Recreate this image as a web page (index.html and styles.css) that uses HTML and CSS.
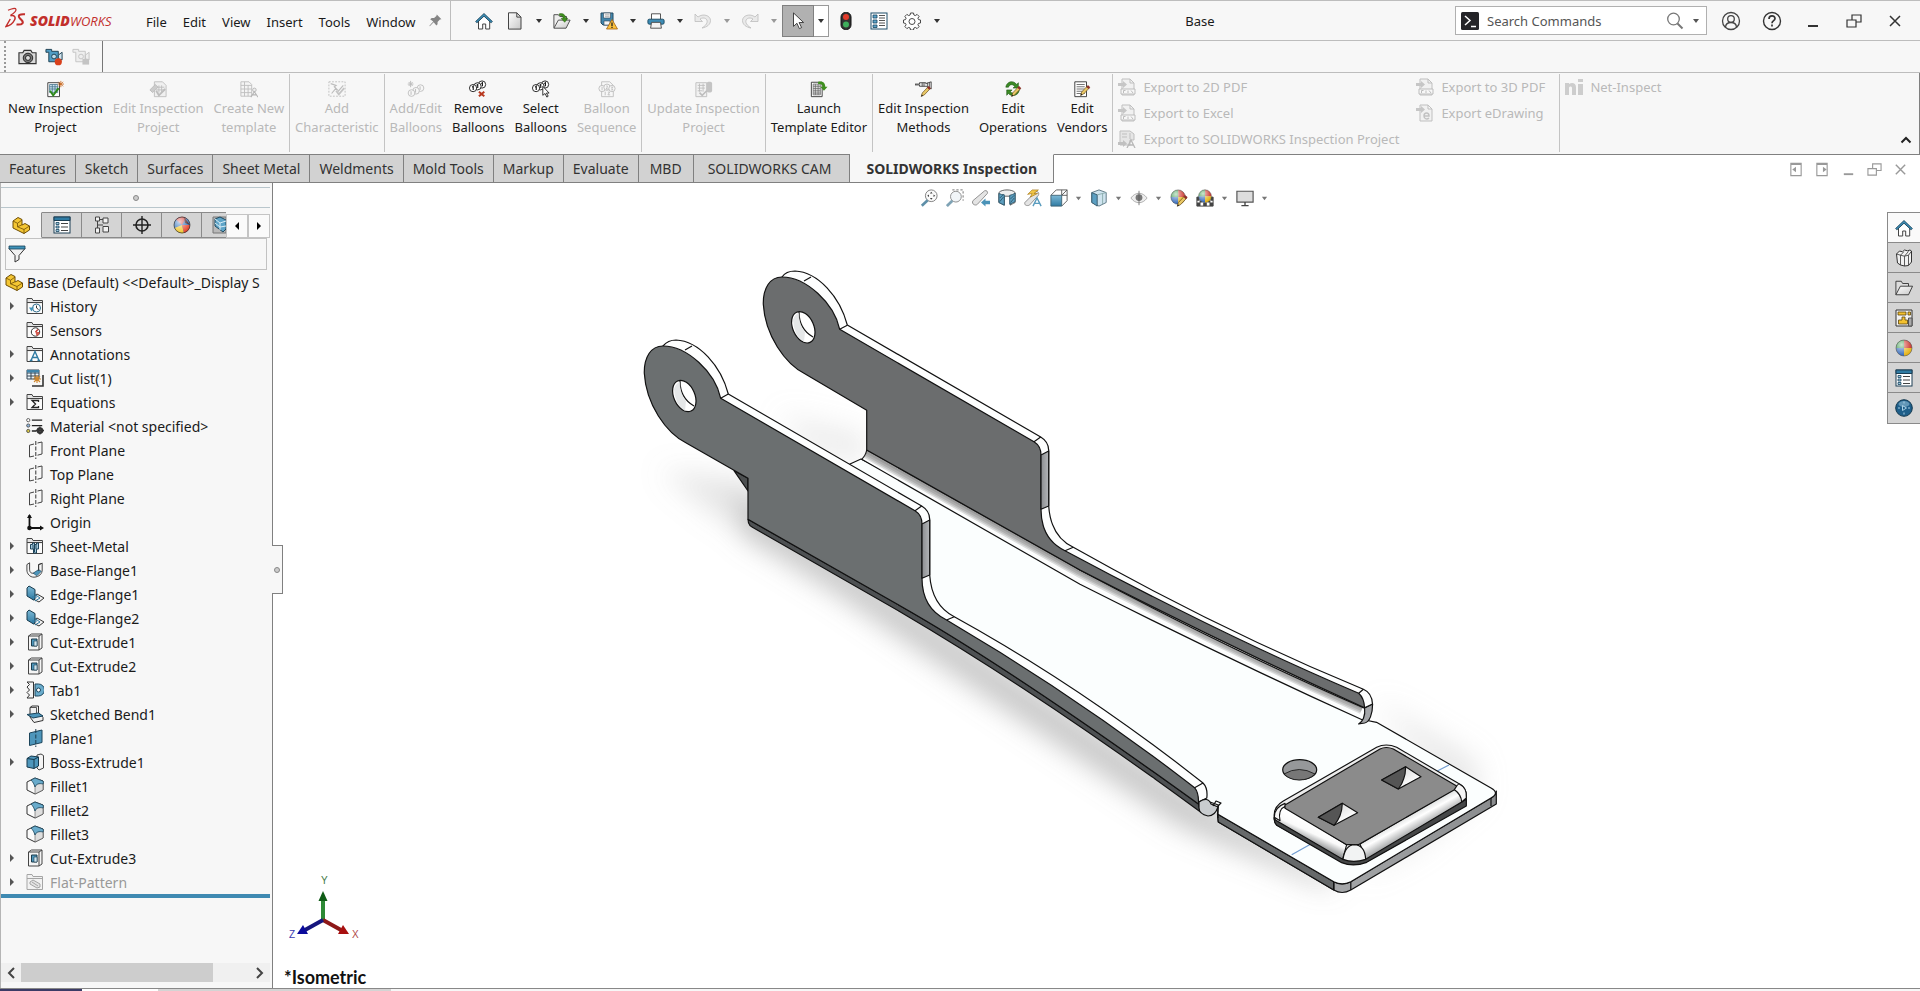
FILE: index.html
```html
<!DOCTYPE html>
<html lang="en">
<head>
<meta charset="UTF-8">
<meta name="viewport" content="width=device-width, initial-scale=1.0">
<title>SOLIDWORKS - Base</title>
<link rel="stylesheet" href="styles.css">
</head>
<body>

<!-- icon sprite -->
<svg class="sprite" xmlns="http://www.w3.org/2000/svg">
  <defs>
    <linearGradient id="gBlue" x1="0" y1="0" x2="0" y2="1"><stop offset="0" stop-color="#7db9d6"/><stop offset="1" stop-color="#2f7ba3"/></linearGradient>
    <linearGradient id="gGrey" x1="0" y1="0" x2="1" y2="1"><stop offset="0" stop-color="#fff"/><stop offset="1" stop-color="#c8c8c8"/></linearGradient>
    <radialGradient id="gShine" cx=".35" cy=".3" r=".7"><stop offset="0" stop-color="#fff" stop-opacity=".75"/><stop offset="1" stop-color="#fff" stop-opacity="0"/></radialGradient>
  </defs>

  <symbol id="i-caret" viewBox="0 0 8 8"><path d="M1 2h6L4 6z" fill="currentColor"/></symbol>
  <symbol id="i-pin" viewBox="0 0 18 18"><path d="M10 2l6 6-2 .5-3 3v3L9.500 16 6 12l-5 5-.5-.5 5-5.500L1.500 8 3.500 6.500h3l3-2.500z" fill="#858585"/></symbol>
  <symbol id="i-home" viewBox="0 0 18 18"><path d="M3.500 9v8h4.200v-5h3v5h4V9L9 3.500z" fill="#fff" stroke="#444"/><path d="M.6 9.500L9 1.500l8.400 8-1.300 1.300L9 4.200 1.900 10.800z" fill="#3b8cb4" stroke="#173f55" stroke-width=".8"/></symbol>
  <symbol id="i-new" viewBox="0 0 18 18"><path d="M2.500.8h8.300l4.200 4.300v12H2.500z" fill="url(#gGrey)" stroke="#444"/><path d="M10.800.8v4.300H15" fill="none" stroke="#444"/></symbol>
  <symbol id="i-open" viewBox="0 0 20 18"><path d="M1 16.500V2h5l1.500 2H15v4" fill="#eee" stroke="#444"/><path d="M1 17L6 8h13l-4.500 9z" fill="url(#gGrey)" stroke="#444"/><path d="M7 1c4-1 7 1 7 5h2.500L13 10.500 9 6h2.200c0-2-1.500-3.500-4.200-3.200z" fill="#3f8f1e" stroke="#215a0a" stroke-width=".5"/></symbol>
  <symbol id="i-save" viewBox="0 0 18 18"><path d="M1 1h12v12H3l-2-2z" fill="#4387ad" stroke="#234a62"/><path d="M3.500 1h7v5h-7zM4 9h6v4H4z" fill="#f5f5f5" stroke="#345" stroke-width=".6"/><path d="M5 2.800h4.500M5 4.300h4.500" stroke="#888" stroke-width=".6"/><path d="M12 7.500l5.500 9.500h-11z" fill="#fbc13c" stroke="#a45f0c" stroke-width=".8"/><path d="M12 10.500v3.400M12 14.700v1.300" stroke="#222" stroke-width="1.300"/></symbol>
  <symbol id="i-print" viewBox="0 0 20 18"><path d="M5 7V1h10l0 6" fill="#fff" stroke="#444"/><rect x="1" y="7" width="18" height="5.500" rx="1.500" fill="#3d8cb5" stroke="#19465f"/><path d="M5 10.500h10l1 6.500H4z" fill="#f3f3f3" stroke="#444"/></symbol>
  <symbol id="i-undo" viewBox="0 0 18 18"><path d="M1 2v7.500h7.500L6 7c4-2.500 8 0 7 3.500-.5 2-2 3.500-5 5.500 5-.8 8.500-3.500 8.500-7.500C16.500 3.500 9 1 4 5z" fill="#e9e9e9" stroke="#bcbcbc" stroke-width=".8"/></symbol>
  <symbol id="i-cursor" viewBox="0 0 18 20"><path d="M4 1v15l3.800-3.500 2.700 6 2.500-1.200-2.800-5.600h5z" fill="#fff" stroke="#333"/></symbol>
  <symbol id="i-light" viewBox="0 0 12 18"><rect x="1" y=".5" width="10" height="17" rx="4.500" fill="#333" stroke="#111"/><circle cx="6" cy="5" r="3" fill="#e23b2a"/><circle cx="6" cy="12.500" r="3" fill="#3fae5c"/></symbol>
  <symbol id="i-list" viewBox="0 0 18 18"><rect x="1" y="1" width="16" height="16" fill="#fff" stroke="#1f4f6b"/><path d="M3 3h4v3H3zM3 8h4v3H3zM3 13h4v2.500H3z" fill="#5da4c8" stroke="#17455f" stroke-width=".8"/><path d="M9 3.500h6M9 6h6M9 8.500h6M9 11h6M9 13.500h6" stroke="#555"/></symbol>
  <symbol id="i-proplist" viewBox="0 0 18 18"><rect x="1" y="1" width="16" height="16" fill="#fff" stroke="#1c3f54"/><path d="M1 1h16v3.500H1z" fill="#2f7ba3" stroke="#1c3f54"/><path d="M3 6.500h3v2H3zM3 10h3v2H3zM3 13.500h3v2H3z" fill="#9fc9de" stroke="#17455f" stroke-width=".8"/><path d="M8 7.500h7M8 11h7M8 14.500h7" stroke="#444"/></symbol>
  <symbol id="i-gear" viewBox="0 0 18 18"><path d="M7.500 1h3l.4 2 1.400.6 1.800-1.200 2 2-1.200 1.800.6 1.400 2 .4v3l-2 .4-.6 1.400 1.200 1.800-2 2-1.800-1.200-1.400.6-.4 2h-3l-.4-2-1.400-.6-1.800 1.200-2-2 1.200-1.800-.6-1.400-2-.4V8l2-.4.6-1.400-1.200-1.800 2-2 1.800 1.200L7.100 3z" fill="#fff" stroke="#4a4a4a"/><circle cx="9" cy="9.500" r="3" fill="none" stroke="#4a4a4a"/></symbol>
  <symbol id="i-cmd" viewBox="0 0 18 18"><rect width="18" height="18" rx="1.500" fill="#242428"/><path d="M4 4l5 4.500L4 13M10 14.500h5" fill="none" stroke="#fff" stroke-width="1.500"/></symbol>
  <symbol id="i-search" viewBox="0 0 18 18"><circle cx="7.500" cy="7" r="5.800" fill="none" stroke="#777" stroke-width="1.300"/><path d="M11.500 11.500l5 5" stroke="#777" stroke-width="2"/></symbol>
  <symbol id="i-user" viewBox="0 0 20 20"><g fill="none" stroke="#444" stroke-width="1.300"><circle cx="10" cy="10" r="8.500"/><circle cx="10" cy="8" r="3.300"/><path d="M4.500 16c.3-3 2.200-4.500 5.500-4.500s5.200 1.500 5.500 4.500"/></g></symbol>
  <symbol id="i-help" viewBox="0 0 20 20"><circle cx="10" cy="10" r="8.500" fill="none" stroke="#333" stroke-width="1.400"/><path d="M7 8c0-4 6-4 6-.5 0 2.200-3 2-3 4.700M10 13.500v2" fill="none" stroke="#333" stroke-width="1.700"/></symbol>
  <symbol id="i-min" viewBox="0 0 16 16"><path d="M3 13h10" stroke="currentColor" stroke-width="2"/></symbol>
  <symbol id="i-restore" viewBox="0 0 16 16"><path d="M1 7h9v7H1zM6 7V2h9v7h-5" fill="none" stroke="currentColor" stroke-width="1.200"/></symbol>
  <symbol id="i-close" viewBox="0 0 16 16"><path d="M3 3l10 10M13 3L3 13" stroke="currentColor" stroke-width="1.500"/></symbol>
  <symbol id="i-paneL" viewBox="0 0 14 16"><path d="M1.500 1.500h11v13h-11zM1.500 2.500h11" fill="none" stroke="currentColor" stroke-width="1.200"/><path d="M7 5v6L3 8z" fill="currentColor"/></symbol>
  <symbol id="i-paneR" viewBox="0 0 14 16"><path d="M1.500 1.500h11v13h-11zM1.500 2.500h11" fill="none" stroke="currentColor" stroke-width="1.200"/><path d="M8 5v6l4-3z" fill="currentColor"/></symbol>
  <symbol id="i-up" viewBox="0 0 12 8"><path d="M1.500 6.500L6 2l4.500 4.500" fill="none" stroke="#222" stroke-width="2"/></symbol>

  <symbol id="i-camera" viewBox="0 0 20 18"><path d="M1 4.500h4l1.500-2.500h7L15 4.500h4V16H1z" fill="#d9d9d9" stroke="#333" stroke-width="1.200"/><circle cx="10.500" cy="10" r="5" fill="#777" stroke="#222"/><circle cx="10.500" cy="10" r="2.600" fill="#ddd" stroke="#222"/></symbol>
  <symbol id="i-video" viewBox="0 0 20 18"><path d="M1 1h6v2h7v11H4V4H1z" fill="#4f9cc4" stroke="#1d3f52"/><path d="M14 7l4-3v8l-4-1z" fill="#cfe3ee" stroke="#1d3f52"/><circle cx="9.500" cy="8.500" r="2.500" fill="#bfdcea" stroke="#1d3f52"/><circle cx="14" cy="14" r="3.800" fill="#d8401c"/></symbol>
  <symbol id="i-videooff" viewBox="0 0 20 18"><path d="M1 1h6v2h7v11H4V4H1zM14 7l4-3v8l-4-1z" fill="#eee" stroke="#c4c4c4"/><circle cx="9.500" cy="8.500" r="2.500" fill="none" stroke="#c4c4c4"/><path d="M11 11h7v6h-7z" fill="#c4c4c4"/></symbol>

  <symbol id="i-newproj" viewBox="0 0 20 18"><path d="M2 2h13v15.500H2z" fill="#fff" stroke="#333"/><path d="M4 4h9v9H4zM4 6.500h9M4 9h9M7 4v9M10 4v9" fill="#cfe4ef" stroke="#3b6c86" stroke-width=".8"/><path d="M4.500 11l3.500 5 6-8" fill="none" stroke="#2f8a1d" stroke-width="2.200"/><path d="M16.500 0v7M13 3.500h7M14 1l5 5M19 1l-5 5" stroke="#c9671c" stroke-width=".9"/></symbol>
  <symbol id="i-editproj" viewBox="0 0 20 18"><path d="M6 1h9l4 4v12.500H6zM8 7h9M8 10h9M11 5v8M14 5v8" fill="#f0f0f0" stroke="#bdbdbd"/><path d="M8 11l3 5 7-7" fill="none" stroke="#bdbdbd" stroke-width="2"/><path d="M1 10l6-6 3 3-6 6z" fill="#ccc" stroke="#bbb"/></symbol>
  <symbol id="i-template" viewBox="0 0 20 18"><path d="M1 1h9l3 3v13H1zM1 5h12M1 9h12M1 13h12M5 1v16M9 5v12" fill="#f4f4f4" stroke="#bdbdbd"/><circle cx="16" cy="10" r="2" fill="#eee" stroke="#b5b5b5"/><path d="M12 18l4-6 4 6M13.500 15.500h5" fill="none" stroke="#b5b5b5" stroke-width="1.200"/></symbol>
  <symbol id="i-addchar" viewBox="0 0 20 18"><path d="M1 1h18v16H1z" fill="none" stroke="#bdbdbd" stroke-dasharray="2 1.500"/><path d="M3 3l6 2-2 1.500 4 4M4 14l5-6M17 5l-6 7" stroke="#bdbdbd" stroke-width="1.300" fill="none"/><path d="M9 11l3 4 6-7" stroke="#c4c4c4" stroke-width="2" fill="none"/></symbol>
  <symbol id="i-chain" viewBox="0 0 20 18"><g fill="#fff" stroke="currentColor"><circle cx="14.500" cy="5" r="4"/><circle cx="9.500" cy="7" r="4"/><circle cx="4.500" cy="9" r="4"/></g><path d="M3.500 8l1.200-1v4M8.500 6l1.200-1v4M13.700 4l1.200-1v4" fill="none" stroke="currentColor" stroke-width="1.300"/></symbol>
  <symbol id="i-addballoon" viewBox="0 0 20 18"><g fill="#f7f7f7" stroke="#bdbdbd"><circle cx="15" cy="8" r="3.700"/><circle cx="10" cy="11" r="3.700"/><circle cx="5" cy="13.500" r="3.700"/><path d="M14.500 6v4M9.500 9v4M4.500 11.500v4M4 0v7M.8 3.500h6.400M1.800 1.200l4.500 4.500M6.300 1.200L1.800 5.700" stroke-width="1.100"/></g></symbol>
  <symbol id="i-seq" viewBox="0 0 20 18"><g fill="#f7f7f7" stroke="#bdbdbd"><path d="M4 1h9l4 4v12.500H4z"/><circle cx="4.500" cy="8.500" r="3.500"/><circle cx="10" cy="7" r="3.500"/><circle cx="15.500" cy="8.500" r="3.500"/><path d="M4.500 6.500v4M9 6c2-1.500 2 .5 0 3h2.500M14.500 7h2l-1 1.500 1 1.500h-2M8 12v4M11 12.500h2l-2 3h2.500" fill="none"/></g></symbol>
  <symbol id="i-update" viewBox="0 0 20 18"><g fill="#f2f2f2" stroke="#bdbdbd"><path d="M1 2h12v15.500H1zM3 5h8M3 8h8M3 11h5M5 3v9M9 3v9"/><path d="M5 13l3 3 5-5" fill="none" stroke-width="1.800"/></g><rect x="13" y="1" width="6" height="12" rx="2" fill="#c4c4c4"/></symbol>
  <symbol id="i-launch" viewBox="0 0 20 18"><path d="M1.500 1.500h12v16h-12z" fill="#fff" stroke="#333"/><path d="M3.500 3.500h8v12h-8zM3.500 6h8M3.500 8.500h8M3.500 11h8M3.500 13.500h8M6 3.500v12M9 3.500v12" fill="#ddd" stroke="#666" stroke-width=".8"/><path d="M9 1c5-1.500 8 1 8 5.500h2.500l-4 4.500-4-4.500H14C14 4 12 3 9 3.500z" fill="#3f8f1e"/></symbol>
  <symbol id="i-pencil" viewBox="4 1 16 17"><path d="M6 17l1.500-5L16 3l3 2.800-8.500 9z" fill="#e9c765" stroke="#5d4213" stroke-width=".9"/><path d="M14.500 4.500L17 2l3 3-2.500 2.500z" fill="#8d2f2a"/><path d="M6 17l.8-2.800 2 1.800z" fill="#222"/></symbol>
  <symbol id="i-methods" viewBox="0 0 20 18"><path d="M0 3.500h5V2h7v1l6-2v8l-5-2.500V6H5V4.500H0z" fill="#e6e6e6" stroke="#333" stroke-width=".9"/><path d="M8 2v4M10 2v4M14 2v5M16 1.500v6" stroke="#333" stroke-width=".8"/><use href="#i-pencil" x="4" y="5" width="15" height="13"/></symbol>
  <symbol id="i-ops" viewBox="0 0 20 18"><path d="M2 7c1-7 9-8 12-3l2-2v6h-6l2-2C9 3 6 4 5 7zM17 10c-1 7-9 8-12 4l-2 2v-6h6l-2 2c3 3 6 1 7-2z" fill="#3b8a25" stroke="#1c5210" stroke-width=".6"/><use href="#i-pencil" x="6" y="5" width="14" height="13"/></symbol>
  <symbol id="i-vendors" viewBox="0 0 20 18"><path d="M2 1h13v16.500H2z" fill="#fff" stroke="#333"/><path d="M4 4h9M4 6.500h9M4 9h9M4 11.500h9M4 14h9" stroke="#666"/><use href="#i-pencil" x="6" y="4" width="14" height="13"/></symbol>
  <symbol id="i-exp" viewBox="0 0 18 18"><path d="M4 1h8l4 4v12H4z" fill="#f1f1f1" stroke="#bfbfbf"/><path d="M12 1v4h4" fill="none" stroke="#bfbfbf"/><path d="M0 5h5V3l4 3.500L5 10V8H0z" fill="#c6c6c6"/><path d="M3 11h14v5H3z" fill="#f7f7f7" stroke="#bdbdbd"/><path d="M5.500 15v-2.500h2M10 12.500v2.500M13 12.500l2 2.500" stroke="#bdbdbd" fill="none"/></symbol>
  <symbol id="i-expe" viewBox="0 0 18 18"><path d="M4 1h8l4 4v12H4zM12 1v4h4" fill="#f1f1f1" stroke="#bfbfbf"/><path d="M0 4h5V2l4 3.500L5 9V7H0z" fill="#c6c6c6"/><path d="M8 12h5c0-4-5-4-5 0 0 3.500 3.500 3.500 5 2" fill="none" stroke="#c2c2c2" stroke-width="1.500"/></symbol>
  <symbol id="i-expsw" viewBox="0 0 18 18"><path d="M2 1h10l4 3v6h-4v5H2z" fill="#e6e6e6" stroke="#bfbfbf"/><path d="M4 4h5M4 7h5M12 3v6" stroke="#bfbfbf" fill="none"/><path d="M0 12h5v-2l4 3.500L5 17v-2H0z" fill="#c0c0c0"/><path d="M9 18l4-8 4 8M10.500 15h5" fill="none" stroke="#b8b8b8" stroke-width="1.300"/></symbol>
  <symbol id="i-ni" viewBox="0 0 18 18"><path d="M0 5h4v1c3-2 7-1 7 3v8H7v-7c0-2-3-2-3 0v7H0zM13 6h5v11h-5zM13 1h5v3h-5z" fill="#cdcdcd"/></symbol>

  <symbol id="i-part" viewBox="0 0 18 18"><path d="M1 5l5-3.500 4 2V9l3-1.500L17.500 10v4L12 17.500 1 12z" fill="#f4c633" stroke="#6e4e06"/><path d="M1 5l4.500 2.300L10 4M5.500 7.300v3.500L12 13.500l5.500-3.500M12 13.500v4M5.500 10.800L10 8.800" fill="none" stroke="#6e4e06" stroke-width=".8"/></symbol>
  <symbol id="i-config" viewBox="0 0 18 18"><g fill="#f2f2f2" stroke="#444"><path d="M2.500 1h4v4h-4zM2.500 12h4v5h-4z"/><path d="M4.500 5v7M6.500 3.500H10M4.500 9H10M10 2h5v5h-5zM10 10.500h5.500v5.500H10z"/></g></symbol>
  <symbol id="i-target" viewBox="0 0 18 18"><circle cx="9" cy="9" r="6" fill="none" stroke="#222" stroke-width="1.600"/><path d="M9 0v18M0 9h18" stroke="#222" stroke-width="1.400"/></symbol>
  <symbol id="i-ball" viewBox="0 0 18 18"><path d="M9 9V1a8 8 0 0 1 8 8z" fill="#c8281f"/><path d="M9 9h8a8 8 0 0 1-8 8z" fill="#e5b212"/><path d="M9 9v8a8 8 0 0 1-8-8z" fill="#2f66b8"/><path d="M9 9H1a8 8 0 0 1 8-8z" fill="#2f9440"/><circle cx="9" cy="9" r="8" fill="url(#gShine)" stroke="#555" stroke-width=".6"/></symbol>
  <symbol id="i-balltab" viewBox="0 0 18 18"><circle cx="9" cy="9" r="8" fill="#2e6fbb"/><path d="M9 9L3 3.500A8 8 0 0 1 13 2z" fill="#d23b34"/><path d="M9 9l-7.500 3A8 8 0 0 0 11 17z" fill="#f1c62d"/><path d="M9 9l2 8a8 8 0 0 0 6-8z" fill="#e6482f"/><path d="M11 1l6 8-5-2z" fill="#401417"/><circle cx="9" cy="9" r="8" fill="url(#gShine)" stroke="#333" stroke-width=".7"/></symbol>
  <symbol id="i-cam" viewBox="0 0 14 18"><path d="M1 1h13v16H1z" fill="#b9b9b9" stroke="#777"/><path d="M3 3l5-2 6 3v9l-3 3-8-6z" fill="#5fa5c8" stroke="#1e4a61"/><path d="M3 3l5 4v7M8 7l6-2M3 7l5 4 6-1" stroke="#d9ecf5" fill="none"/></symbol>
  <symbol id="i-filter" viewBox="0 0 18 18"><path d="M1 3.500L7 10.500V17l4-2.500v-4l6-7z" fill="#f2f2f2" stroke="#333"/><path d="M1 1h16v3H1z" fill="#3f93ba" stroke="#173f55" stroke-width=".8"/></symbol>

  <symbol id="i-folder" viewBox="0 0 18 18"><path d="M1 16.500v-15h5l1 2h9.500v13z" fill="#e4e4e4" stroke="#444"/><path d="M1 5.500h15.500" stroke="#444"/><path d="M2 6.500h14v9.500H2z" fill="#fbfbfb"/></symbol>
  <symbol id="i-history" viewBox="0 0 18 18"><use href="#i-folder"/><circle cx="10.500" cy="11" r="4" fill="#fff" stroke="#2f6c8c"/><path d="M10.500 8.500v2.500l2 1.500" fill="none" stroke="#333"/><path d="M3 10.500h5l-2.500 4z" fill="#3f93ba"/></symbol>
  <symbol id="i-sensors" viewBox="0 0 18 18"><use href="#i-folder"/><circle cx="9.500" cy="11" r="4.200" fill="#fff" stroke="#333"/><path d="M9.500 11l2.500-2.500" stroke="#c4302b" stroke-width="1.500"/><path d="M9.500 11h4a4 4 0 0 1-3 4z" fill="#d45a50"/></symbol>
  <symbol id="i-annot" viewBox="0 0 18 18"><use href="#i-folder"/><path d="M5 15.500l4-9 4 9M6.500 12.500h5M3.800 15.500h2.700M11.500 15.500h2.700" fill="none" stroke="#2f7ba3" stroke-width="1.400"/></symbol>
  <symbol id="i-cutlist" viewBox="0 0 18 18"><path d="M1 1h12v9H1zM1 4h12M1 7h12M5 1v9M9 1v9" fill="#eaf3f8" stroke="#345"/><path d="M1 1h12v2.500H1z" fill="#3f84aa"/><path d="M11 6v8M7 10h8M8 7l6 6M14 7l-6 6" stroke="#cf862b" stroke-width="1.100"/><path d="M6 17h11V6" stroke="#333" stroke-width="1.600" fill="none"/></symbol>
  <symbol id="i-eq" viewBox="0 0 18 18"><use href="#i-folder"/><path d="M12.500 9V7.500H6l3.500 3.500L6 14.500h6.500V13" fill="none" stroke="#222" stroke-width="1.300"/></symbol>
  <symbol id="i-material" viewBox="0 0 20 18"><g stroke="#444" stroke-width=".9"><circle cx="2.500" cy="2.500" r="1.800" fill="#fff"/><circle cx="2.500" cy="8.500" r="1.800" fill="#8fb5dd"/><circle cx="2.500" cy="14.500" r="1.800" fill="#d9c845"/></g><path d="M6.500 2.500H18M6.500 8.500H18M6.500 14.500h5" stroke="#222" stroke-width="1.500"/><circle cx="15.500" cy="14" r="2.500" fill="none" stroke="#333" stroke-width="2.500"/><path d="M15.500 9.500v9M11 14h9" stroke="#333" stroke-width="1.500"/></symbol>
  <symbol id="i-plane" viewBox="0 0 18 18"><path d="M8 3L3.500 4.200V16L8 15M11.500 2L16 1v12l-4.500 1.200" fill="none" stroke="#444"/><path d="M9.800 0v18" stroke="#333" stroke-dasharray="4 1.500"/></symbol>
  <symbol id="i-origin" viewBox="0 0 18 18"><path d="M3.500 2v13H16" fill="none" stroke="#111" stroke-width="1.800"/><path d="M1 5l2.500-4L6 5zM14 12.500l4 2.500-4 2.500z" fill="#111"/><circle cx="3.500" cy="15" r="2.300" fill="#111"/></symbol>
  <symbol id="i-sheet" viewBox="0 0 18 18"><use href="#i-folder"/><path d="M4.500 7.500h2V6h2v1.500h2V6h2v6h-2v4h-3v-4h-3z" fill="#a5cade" stroke="#1d455b"/><path d="M6 9h5M6 11h5M8.500 7v8" stroke="#1d455b"/></symbol>
  <symbol id="i-bflange" viewBox="0 0 20 18"><path d="M1 3l3-2v7c0 4 2 5 5 4.500l5-3V3l4-1.500V9c0 4-3 7.500-9 8-5 0-8-4-8-8z" fill="#f4f4f4" stroke="#333"/><path d="M8 12.500l6-4 3 2-5 5z" fill="#4e96bb" stroke="#1d455b" stroke-width=".7"/><path d="M14 3v7M18 1.500l-4 1.500" stroke="#333"/></symbol>
  <symbol id="i-eflange" viewBox="0 0 18 18"><path d="M8 11l3-2 7 4-5 4-6-3z" fill="#f1f1f1" stroke="#333"/><path d="M1 3l2-2 6 3.500V14l-1.500 1L1 11z" fill="url(#gBlue)" stroke="#16394c"/><path d="M6 12h5M9 9.500l5 3.500-5 3" fill="none" stroke="#2f7ba3"/></symbol>
  <symbol id="i-cut" viewBox="0 0 18 18"><path d="M2.500 3l3-2h10.500v14l-3 2H2.500z" fill="#f4f4f4" stroke="#444"/><path d="M13 3v14M2.500 3H13l3-2" fill="none" stroke="#444"/><path d="M5.500 6h5.500v7H5.500z" fill="#4e96bb" stroke="#1d3c4d"/><path d="M8 8h3v5H8z" fill="#cfe4ef" stroke="#1d3c4d" stroke-width=".6"/></symbol>
  <symbol id="i-tab" viewBox="0 0 18 18"><path d="M1 1h6.500v16H1l2.500-3L1 11.500 3.500 9 1 6l2.500-2.500z" fill="#f4f4f4" stroke="#333"/><path d="M9 3h3.500a6 6 0 0 1 0 12H9z" fill="#69abcb" stroke="#1d455b"/><circle cx="12.500" cy="9" r="2" fill="#fff" stroke="#1d455b"/></symbol>
  <symbol id="i-bend" viewBox="0 0 18 18"><path d="M4 2.500L6 1h6.500v7L16 11l1 1.500v3L8 17.500 4 12z" fill="#f1f1f1" stroke="#333"/><path d="M1 9.500L12.500 8 17 11 7 13z" fill="#4e96bb" stroke="#1d455b"/><path d="M4 2.500h6.500V8" fill="none" stroke="#333" stroke-width=".8"/></symbol>
  <symbol id="i-plane1" viewBox="0 0 18 18"><path d="M3.500 4L16 1v12.500L3.500 16.500z" fill="#4e96bb" stroke="#1d455b"/><path d="M9.800 0v18" stroke="#1d3c4d" stroke-dasharray="4 1.500"/></symbol>
  <symbol id="i-boss" viewBox="0 0 18 18"><path d="M11 2l4-1 2.500 1.500V15L13 17l-2-2z" fill="#f4f4f4" stroke="#444"/><path d="M1 5.500L5 3l7.500 1v9L8 15.500 1 14z" fill="#4e96bb" stroke="#16394c"/><path d="M1 5.500l7 1L12.500 4M8 6.500v9" fill="none" stroke="#16394c"/></symbol>
  <symbol id="i-fillet" viewBox="0 0 18 18"><path d="M1 5l8-4 8 3v9l-8 4-8-4z" fill="#fbfbfb" stroke="#333"/><path d="M9 17V8c0-2 3-4 8-4v9z" fill="#dedede" stroke="#555" stroke-width=".6"/><path d="M5 3l4-2 8 3c.5 1 .5 2 0 3-4-1-7 0-8 3-1-3-2-5-4-7z" fill="#69abcb" stroke="#1d455b" stroke-width=".8"/></symbol>
  <symbol id="i-flat" viewBox="0 0 18 18"><path d="M1 16.500v-15h5l1 2h9.500v13zM1 5.500h15.500" fill="#f2f2f2" stroke="#a5a5a5"/><path d="M4 9l3-2 7 4v3l-3 1-7-4zM6 9l6 4" fill="#e4e4e4" stroke="#a5a5a5"/></symbol>

  <symbol id="i-zoomfit" viewBox="0 0 20 20"><circle cx="12.500" cy="7.500" r="6.500" fill="#fafafa" stroke="#777"/><path d="M12.500 3l-1.500 2h3zM12.500 12l-1.500-2h3zM8 7.500L10 6v3zM17 7.500L15 6v3z" fill="#444"/><path d="M8.500 12.500L2 18.500" stroke="#5e8fa8" stroke-width="3"/></symbol>
  <symbol id="i-zoomarea" viewBox="0 0 20 20"><path d="M7 1h12v12" fill="none" stroke="#666" stroke-dasharray="2.500 2"/><circle cx="11" cy="8.500" r="6" fill="#f1f5f8" stroke="#888"/><path d="M7 13l-6 6" stroke="#7fa3b5" stroke-width="3"/></symbol>
  <symbol id="i-prevview" viewBox="0 0 20 20"><path d="M1 13L14 2c2-1 4 1 3 3L6 17c-2 2-7 0-5-4z" fill="#e4e4e4" stroke="#888"/><path d="M10 15l5-4.500v2.500h5v4h-5V19.500z" fill="#4b93b8"/></symbol>
  <symbol id="i-section" viewBox="0 0 20 20"><path d="M1 4c3-4 15-4 18 0v11c-2 1-4 2-5 3V8H7v10l-6-3z" fill="#eee" stroke="#555"/><path d="M1 5c2 1 4 1.500 6 1.500V18l-6-3zM13 7c2-.5 4-1 6-2.500V14l-6 3z" fill="#5d9fc0" stroke="#2b566b"/><path d="M2 10l4-4M2 14l4-5M14 11l4-4M14 15l4-5" stroke="#2b566b"/></symbol>
  <symbol id="i-annview" viewBox="0 0 20 20"><path d="M1 15L13 3c3-1 4 2 3 4L6 18c-3 1-6 0-5-3z" fill="#e4e4e4" stroke="#888"/><path d="M4 6l5-5h7l-5 4h4l-8 4 2-4z" fill="#f0c548" stroke="#a37415" stroke-width=".7"/><path d="M10 19l4.500-9 4.500 9M11.500 16h6" stroke="#5a9cbe" stroke-width="1.600" fill="none"/></symbol>
  <symbol id="i-orient" viewBox="0 0 20 20"><path d="M7 1h12v12l-6 6M7 1L1 7M19 1l-6 6M13 1v6M19 7h-6" fill="#fff" stroke="#555"/><path d="M1 7h12v12H1z" fill="url(#gBlue)" stroke="#3d6273"/></symbol>
  <symbol id="i-display" viewBox="0 0 20 20"><path d="M2 4l8-3 8 3v11l-8 4-8-4z" fill="#cfe4ef" stroke="#55707e"/><path d="M2 4l6 2.500V19l-6-4z" fill="#5b9fc2" stroke="#35586a"/><path d="M8 6.500L18 4M14 5v12" stroke="#8aa" fill="none"/></symbol>
  <symbol id="i-eye" viewBox="0 0 20 20"><path d="M1 10c5-7 13-7 18 0-5 7-13 7-18 0z" fill="#eee" stroke="#aaa"/><circle cx="10" cy="9.500" r="3.800" fill="#777"/><path d="M10 2v16" stroke="#555" stroke-width=".8"/></symbol>
  <symbol id="i-appear" viewBox="0 0 20 20"><use href="#i-ball" width="18" height="18"/><use href="#i-pencil" x="6" y="6" width="14" height="14"/></symbol>
  <symbol id="i-scene" viewBox="0 0 20 20"><path d="M1 9h18v10H1z" fill="#fff" stroke="#333"/><path d="M1 15h4v4H1zM8 15h4v4H8zM15 15h4v4h-4zM1 9h3v4H1zM16 9h3v4h-3zM4 13h3v2H4zM13 13h3v2h-3z" fill="#444"/><use href="#i-ball" x="2" width="16" height="16"/></symbol>
  <symbol id="i-monitor" viewBox="0 0 20 20"><path d="M1 2.500h18v12H1z" fill="#ddd" stroke="#555" stroke-width="1.300"/><path d="M10 14.500V18M6 18.500h8" stroke="#444" stroke-width="1.500"/></symbol>

  <symbol id="i-library" viewBox="0 0 18 18"><path d="M1.500 5l3-3 3 .8 2-1.800 3 .8L15 1l1.500 1v11l-3 3.500-4 .5-4-1-3-2z" fill="#f1f1f1" stroke="#333"/><path d="M1.500 5l4 1.200 3.300-3.400M5.500 6.200V16M5.500 6.200l4 1 4-4.800M9.500 7.200V17M9.500 7.200l4-1 3-4M13.500 6.200v10" fill="none" stroke="#333" stroke-width=".8"/></symbol>
  <symbol id="i-dir" viewBox="0 0 20 18"><path d="M1 16.500v-15h6l1.500 2.500H15v3" fill="#ddd" stroke="#333"/><path d="M1 16.500L6 7h13.500L15 16.500z" fill="url(#gGrey)" stroke="#333"/></symbol>
  <symbol id="i-palette" viewBox="0 0 18 18"><path d="M1 1h16v16H1z" fill="#f3f3f3" stroke="#333"/><path d="M3 3h8v3H3zM13 3h2.500v3H13zM7 8h3v3h2.500v4h-9v-4H7z" fill="#f3c12f" stroke="#5b450c" stroke-width=".8"/><path d="M13.500 9H17v8h-3.500z" fill="#aaa" stroke="#555"/></symbol>
  <symbol id="i-forum" viewBox="0 0 18 18"><circle cx="9" cy="9" r="8.300" fill="#1f5f8a" stroke="#12384f"/><ellipse cx="9" cy="5" rx="5.500" ry="3" fill="#8fbdd6" opacity=".6"/><path d="M7.500 6.500l4 2.500-4 2.500zM3 9h2M13 9h2M9 2.500v2M9 13.500v2" fill="none" stroke="#a8cfe4"/></symbol>
</svg>

<header class="titlebar">
  <a class="logo" href="#" aria-label="SOLIDWORKS">
    <svg width="22" height="22" viewBox="0 0 22 22"><path d="M3 3.300C6 2 10.500.5 11 2.300 11.300 4 8.500 6.500 5.500 8.300" fill="none" stroke="#c22f2c" stroke-width="1.200"/><path d="M5.500 8.800C9.500 8 11 10 9.500 13 8 16 4.500 18.800 1 19.500L5.300 12" fill="none" stroke="#c22f2c" stroke-width="1.500"/><path d="M20 7.300c-5-.5-7.500 1-5.500 3.500s4.500 3.500 3 5.500c-1 1.300-3 1.500-6 1.200" fill="none" stroke="#c22f2c" stroke-width="2"/></svg>
    <span class="solid">SOLID</span><span class="works">WORKS</span>
  </a>
  <nav class="menu">
    <button>File</button>
    <button>Edit</button>
    <button>View</button>
    <button>Insert</button>
    <button>Tools</button>
    <button>Window</button>
  </nav>
  <button class="pin" aria-label="Pin menu"><svg width="14" height="14"><use href="#i-pin"/></svg></button>
  <div class="quick">
    <button class="roomy" aria-label="Home"><svg><use href="#i-home"/></svg></button>
    <button aria-label="New"><svg><use href="#i-new"/></svg></button>
    <button class="drop" aria-label="New options"><svg><use href="#i-caret"/></svg></button>
    <button aria-label="Open"><svg><use href="#i-open"/></svg></button>
    <button class="drop" aria-label="Open options"><svg><use href="#i-caret"/></svg></button>
    <button aria-label="Save"><svg><use href="#i-save"/></svg></button>
    <button class="drop" aria-label="Save options"><svg><use href="#i-caret"/></svg></button>
    <button aria-label="Print"><svg><use href="#i-print"/></svg></button>
    <button class="drop" aria-label="Print options"><svg><use href="#i-caret"/></svg></button>
    <button class="off" aria-label="Undo"><svg><use href="#i-undo"/></svg></button>
    <button class="drop off" aria-label="Undo options"><svg><use href="#i-caret"/></svg></button>
    <button class="off" aria-label="Redo"><svg class="flip"><use href="#i-undo"/></svg></button>
    <button class="drop off" aria-label="Redo options"><svg><use href="#i-caret"/></svg></button>
    <button class="select-tool" aria-label="Select"><svg><use href="#i-cursor"/></svg></button>
    <button class="select-drop" aria-label="Select options"><svg><use href="#i-caret"/></svg></button>
    <button class="roomy" aria-label="Rebuild"><svg><use href="#i-light"/></svg></button>
    <button class="roomy" aria-label="File properties"><svg><use href="#i-list"/></svg></button>
    <button class="roomy" aria-label="Options"><svg><use href="#i-gear"/></svg></button>
    <button class="drop" aria-label="Options list"><svg><use href="#i-caret"/></svg></button>
  </div>
  <h1 class="doc-title">Base</h1>
  <label class="search">
    <svg width="18" height="18"><use href="#i-cmd"/></svg>
    <input type="text" placeholder="Search Commands" aria-label="Search Commands">
    <svg width="18" height="18"><use href="#i-search"/></svg>
    <svg class="search-caret" width="10" height="8"><use href="#i-caret"/></svg>
  </label>
  <div class="window-buttons">
    <button aria-label="Account"><svg width="20" height="20"><use href="#i-user"/></svg></button>
    <button aria-label="Help"><svg width="20" height="20"><use href="#i-help"/></svg></button>
    <button aria-label="Minimize"><svg width="16" height="16"><use href="#i-min"/></svg></button>
    <button aria-label="Restore"><svg width="16" height="16"><use href="#i-restore"/></svg></button>
    <button aria-label="Close"><svg width="16" height="16"><use href="#i-close"/></svg></button>
  </div>
</header>

<div class="capture-bar">
  <div class="capture-tools">
    <button aria-label="Image capture"><svg width="19" height="18"><use href="#i-camera"/></svg></button>
    <button aria-label="Record video"><svg width="19" height="18"><use href="#i-video"/></svg></button>
    <button aria-label="Stop video" disabled><svg width="19" height="18"><use href="#i-videooff"/></svg></button>
  </div>
</div>

<section class="ribbon">
  <div class="group first">
    <button class="cmd"><svg><use href="#i-newproj"/></svg>New Inspection<br>Project</button>
    <button class="cmd" disabled><svg><use href="#i-editproj"/></svg>Edit Inspection<br>Project</button>
    <button class="cmd" disabled><svg><use href="#i-template"/></svg>Create New<br>template</button>
  </div>
  <div class="group">
    <button class="cmd" disabled><svg><use href="#i-addchar"/></svg>Add<br>Characteristic</button>
  </div>
  <div class="group">
    <button class="cmd" disabled><svg><use href="#i-addballoon"/></svg>Add/Edit<br>Balloons</button>
    <button class="cmd"><svg viewBox="0 0 20 18"><use href="#i-chain" y="-1"/><path d="M11 12l6 5M17 12l-6 5" stroke="#b8381f" stroke-width="2.200"/></svg>Remove<br>Balloons</button>
    <button class="cmd"><svg viewBox="0 0 20 18"><use href="#i-chain" y="-1"/><path d="M12 6v10l2.500-2 2 4 1.500-1-2-3.500h3z" fill="#fff" stroke="#222"/></svg>Select<br>Balloons</button>
    <button class="cmd" disabled><svg><use href="#i-seq"/></svg>Balloon<br>Sequence</button>
  </div>
  <div class="group">
    <button class="cmd" disabled><svg><use href="#i-update"/></svg>Update Inspection<br>Project</button>
  </div>
  <div class="group">
    <button class="cmd"><svg><use href="#i-launch"/></svg>Launch<br>Template Editor</button>
  </div>
  <div class="group">
    <button class="cmd"><svg><use href="#i-methods"/></svg>Edit Inspection<br>Methods</button>
    <button class="cmd"><svg><use href="#i-ops"/></svg>Edit<br>Operations</button>
    <button class="cmd"><svg><use href="#i-vendors"/></svg>Edit<br>Vendors</button>
  </div>
  <div class="group exports">
    <div class="stack">
      <button disabled><svg><use href="#i-exp"/></svg>Export to 2D PDF</button>
      <button disabled><svg><use href="#i-exp"/></svg>Export to Excel</button>
      <button disabled><svg><use href="#i-expsw"/></svg>Export to SOLIDWORKS Inspection Project</button>
    </div>
    <div class="stack">
      <button disabled><svg><use href="#i-exp"/></svg>Export to 3D PDF</button>
      <button disabled><svg><use href="#i-expe"/></svg>Export eDrawing</button>
    </div>
  </div>
  <div class="group last">
    <div class="stack">
      <button disabled><svg><use href="#i-ni"/></svg>Net-Inspect</button>
    </div>
    <button class="collapse" aria-label="Collapse ribbon"><svg width="12" height="8"><use href="#i-up"/></svg></button>
  </div>
</section>

<div class="tabs">
  <button>Features</button>
  <button>Sketch</button>
  <button>Surfaces</button>
  <button>Sheet Metal</button>
  <button>Weldments</button>
  <button>Mold Tools</button>
  <button>Markup</button>
  <button>Evaluate</button>
  <button class="mbd">MBD</button>
  <button class="long">SOLIDWORKS CAM</button>
  <button class="active">SOLIDWORKS Inspection</button>
  <div class="doc-buttons">
    <button aria-label="Expand left"><svg width="14" height="15"><use href="#i-paneL"/></svg></button>
    <button aria-label="Expand right"><svg width="14" height="15"><use href="#i-paneR"/></svg></button>
    <button aria-label="Minimize document"><svg width="15" height="15"><use href="#i-min"/></svg></button>
    <button aria-label="Restore document"><svg width="15" height="15"><use href="#i-restore"/></svg></button>
    <button aria-label="Close document"><svg width="15" height="15"><use href="#i-close"/></svg></button>
  </div>
</div>

<main class="workspace">
  <aside class="panel">
    <div class="grip"><span class="dot"></span></div>
    <div class="panel-tabs">
      <button class="active" aria-label="FeatureManager"><svg><use href="#i-part"/></svg></button>
      <button aria-label="PropertyManager"><svg><use href="#i-proplist"/></svg></button>
      <button aria-label="ConfigurationManager"><svg><use href="#i-config"/></svg></button>
      <button aria-label="DimXpertManager"><svg><use href="#i-target"/></svg></button>
      <button aria-label="DisplayManager"><svg><use href="#i-balltab"/></svg></button>
      <button class="cut" aria-label="CAM tree"><svg><use href="#i-cam"/></svg></button>
      <button class="arrow" aria-label="Scroll left"><svg viewBox="0 0 8 8"><path d="M6 0v8L2 4z"/></svg></button>
      <button class="arrow" aria-label="Scroll right"><svg viewBox="0 0 8 8"><path d="M2 0v8l4-4z"/></svg></button>
    </div>
    <label class="filter">
      <svg width="18" height="18"><use href="#i-filter"/></svg>
      <input type="text" aria-label="Filter tree">
    </label>
    <ul class="tree">
      <li class="root"><svg><use href="#i-part"/></svg>Base (Default) &lt;&lt;Default&gt;_Display S</li>
      <li><button aria-label="Expand"></button><svg><use href="#i-history"/></svg>History</li>
      <li><svg><use href="#i-sensors"/></svg>Sensors</li>
      <li><button aria-label="Expand"></button><svg><use href="#i-annot"/></svg>Annotations</li>
      <li><button aria-label="Expand"></button><svg><use href="#i-cutlist"/></svg>Cut list(1)</li>
      <li><button aria-label="Expand"></button><svg><use href="#i-eq"/></svg>Equations</li>
      <li><svg><use href="#i-material"/></svg>Material &lt;not specified&gt;</li>
      <li><svg><use href="#i-plane"/></svg>Front Plane</li>
      <li><svg><use href="#i-plane"/></svg>Top Plane</li>
      <li><svg><use href="#i-plane"/></svg>Right Plane</li>
      <li><svg><use href="#i-origin"/></svg>Origin</li>
      <li><button aria-label="Expand"></button><svg><use href="#i-sheet"/></svg>Sheet-Metal</li>
      <li><button aria-label="Expand"></button><svg><use href="#i-bflange"/></svg>Base-Flange1</li>
      <li><button aria-label="Expand"></button><svg><use href="#i-eflange"/></svg>Edge-Flange1</li>
      <li><button aria-label="Expand"></button><svg><use href="#i-eflange"/></svg>Edge-Flange2</li>
      <li><button aria-label="Expand"></button><svg><use href="#i-cut"/></svg>Cut-Extrude1</li>
      <li><button aria-label="Expand"></button><svg><use href="#i-cut"/></svg>Cut-Extrude2</li>
      <li><button aria-label="Expand"></button><svg><use href="#i-tab"/></svg>Tab1</li>
      <li><button aria-label="Expand"></button><svg><use href="#i-bend"/></svg>Sketched Bend1</li>
      <li><svg><use href="#i-plane1"/></svg>Plane1</li>
      <li><button aria-label="Expand"></button><svg><use href="#i-boss"/></svg>Boss-Extrude1</li>
      <li><svg><use href="#i-fillet"/></svg>Fillet1</li>
      <li><svg><use href="#i-fillet"/></svg>Fillet2</li>
      <li><svg><use href="#i-fillet"/></svg>Fillet3</li>
      <li><button aria-label="Expand"></button><svg><use href="#i-cut"/></svg>Cut-Extrude3</li>
      <li class="suppressed"><button aria-label="Expand"></button><svg><use href="#i-flat"/></svg>Flat-Pattern</li>
    </ul>
    <div class="scrollbar">
      <button aria-label="Scroll left"><svg width="8" height="12"><path d="M7 1L2 6l5 5" fill="none" stroke="#444" stroke-width="2"/></svg></button>
      <div class="track"><div class="thumb"></div></div>
      <button aria-label="Scroll right"><svg width="8" height="12"><path d="M1 1l5 5-5 5" fill="none" stroke="#444" stroke-width="2"/></svg></button>
    </div>
    <button class="splitter" aria-label="Collapse panel"><span class="dot"></span></button>
  </aside>

  <section class="viewport">
    <div class="view-tools">
      <button aria-label="Zoom to fit"><svg><use href="#i-zoomfit"/></svg></button>
      <button aria-label="Zoom to area"><svg><use href="#i-zoomarea"/></svg></button>
      <button aria-label="Previous view"><svg><use href="#i-prevview"/></svg></button>
      <button aria-label="Section view"><svg><use href="#i-section"/></svg></button>
      <button aria-label="Annotation views"><svg><use href="#i-annview"/></svg></button>
      <button aria-label="View orientation"><svg><use href="#i-orient"/></svg></button>
      <button class="vdrop" aria-label="Orientation list"><svg><use href="#i-caret"/></svg></button>
      <button aria-label="Display style"><svg><use href="#i-display"/></svg></button>
      <button class="vdrop" aria-label="Display list"><svg><use href="#i-caret"/></svg></button>
      <button aria-label="Hide/show items"><svg><use href="#i-eye"/></svg></button>
      <button class="vdrop" aria-label="Items list"><svg><use href="#i-caret"/></svg></button>
      <button aria-label="Edit appearance"><svg><use href="#i-appear"/></svg></button>
      <button aria-label="Apply scene"><svg><use href="#i-scene"/></svg></button>
      <button class="vdrop" aria-label="Scene list"><svg><use href="#i-caret"/></svg></button>
      <button aria-label="View settings"><svg><use href="#i-monitor"/></svg></button>
      <button class="vdrop" aria-label="Settings list"><svg><use href="#i-caret"/></svg></button>
    </div>

    <!-- 3D model, isometric -->
    <svg class="model" viewBox="273 183 1647 805" preserveAspectRatio="xMidYMid meet">
      <defs>
        <filter id="soft" x="-30%" y="-30%" width="160%" height="160%"><feGaussianBlur stdDeviation="14"/></filter>
        <linearGradient id="endface" x1="0" y1="0" x2="1" y2="0"><stop offset="0" stop-color="#8b8d90"/><stop offset="1" stop-color="#b4b6b9"/></linearGradient>
        <linearGradient id="filletL" gradientUnits="userSpaceOnUse" x1="250" y1="372" x2="228" y2="420"><stop offset="0" stop-color="#fff"/><stop offset=".5" stop-color="#fafafa"/><stop offset="1" stop-color="#9b9d9e"/></linearGradient>
        <linearGradient id="filletR" gradientUnits="userSpaceOnUse" x1="525" y1="350" x2="550" y2="395"><stop offset="0" stop-color="#dcdede"/><stop offset=".4" stop-color="#fff"/><stop offset="1" stop-color="#a9abac"/></linearGradient>
        <linearGradient id="pocket" x1="0" y1="0" x2="1" y2="1"><stop offset="0" stop-color="#8a8a8a"/><stop offset=".6" stop-color="#fff"/></linearGradient>
        <linearGradient id="side" gradientUnits="userSpaceOnUse" x1="1340" y1="885" x2="1495" y2="800"><stop offset="0" stop-color="#a4a6a8"/><stop offset="1" stop-color="#8a8c8e"/></linearGradient>
      </defs>

      <!-- soft ground shadow -->
      <g filter="url(#soft)">
        <path d="M740 490L960 640 1200 800 1335 880 1330 888 1180 825 1000 705 840 595 745 535z" fill="#8a8a8a" opacity=".5"/>
        <path d="M660 470L750 480 765 545 715 515z" fill="#999" opacity=".25"/>
        <path d="M780 415l85 20 0 30-60-20z" fill="#bbb" opacity=".3"/>
        <path d="M1375 700l100 60 5 35-60 50-60 35 90-90z" fill="#bbb" opacity=".35"/>
      </g>

      <g stroke="#111" stroke-width="1.200" stroke-linejoin="round">
        <!-- base plate -->
        <path d="M1217.500 814L1333.800 881.700Q1342 886 1350.800 881.700L1491 798Q1497 794 1496.300 791V804L1350.800 890Q1342 895 1333.800 890L1218.300 822z" fill="url(#side)"/>
        <path d="M1217.500 814L1333.800 881.700V890L1218.300 822z" fill="#66696a"/>
        <path d="M850 464L861 459 1365 720 1376.500 722.300 1491 788Q1500 793 1491 798L1350.800 881.700Q1342 886 1333.800 881.700L1217.500 814 1218.300 805 1196 797Q1070 705 930 620L800 530z" fill="#fbfefe"/>
        <path d="M1333.800 882v8M1350.800 882v8M1491 798v8" fill="none"/>
        <path d="M1291.700 854.700l18.300-10.300M1437.300 771l11.700-6" stroke="#6f9bd0"/>

        <!-- far flange: bend, edge, inner face -->
        <path d="M866.700 450L1080 570Q1230 647 1364.600 707.700L1372.500 704 1368.600 720 1362.600 720Q1230 660 1080 584.300L861.700 459.300Q866 455 866.700 450z" fill="#fcfdfd"/>
        <g fill="none" stroke="#4c4e50" stroke-opacity=".18">
          <path d="M867 451L1080 570Q1230 647 1363 707" stroke-width="5"/>
          <path d="M867 451L1080 570Q1230 647 1363 707" stroke-width="9"/>
          <path d="M867 451L1080 570Q1230 647 1363 707" stroke-width="12"/>
          <path d="M867 451L1080 570Q1230 647 1363 707" stroke-width="15"/>
        </g>
        <path d="M1364.600 708l8-4c0 10-3 18-8 19l-6 1c4-2 7-8 6-16z" fill="#a3a5a8"/>
        <path d="M782 277Q786 271 795 271C818 272 840 297 847.300 325L1040.700 437Q1049 442 1048.700 451V506C1050 525 1058 540 1073.300 547.300Q1220 630 1363.400 689.300Q1372 693 1372.500 704L1364 708Q1230 650 1080 570L1020 530V450L830 345z" fill="#fdfefe"/>
        <path d="M763.300 304.300C763 288 770 277 782 277C806 277 834 303 839.700 329.300L1034 441.700Q1041 446 1041 455V509.300C1041 528 1049 543 1065 550.700Q1226 637 1358.700 693.300Q1364 698 1364.600 707.700Q1230 647 1080 570L866.700 450V410.300L805.700 374.300C785 364 765 335 763.300 304.300z" fill="#6b6d6e"/>
        <path d="M1041 455l7.700-4v55l-7.700 3.300z" fill="url(#endface)"/>
        <path d="M839.700 329.300l7.600-4M1034 441.700l6.700-4.700M1065 550.700l8.300-3.400M1358.700 693.300l4.700-4M804 281l7-4" fill="none"/>

        <!-- near flange -->
        <path d="M734 470.700L748 478.300V491z" fill="#4d5051"/>
        <path d="M663 346Q668 340 676 340C699 341 721 366 728.300 394L921.700 506Q930 511 929.700 520V575C931 594 939 609 954.300 616.700Q1080 686 1203 783Q1208 788 1206.800 798L1198.500 802Q1070 706 940 630L900 580V520L710 410z" fill="#fdfefe"/>
        <path d="M748 519.300L900 605.700Q1010 668 1198.500 804L1200.500 812Q1040 694 900 611.700L752 527Q748 525 748 519.300z" fill="#4e5153"/>
        <path d="M644.300 373.300C644 357 651 346 663 346C687 346 715 372 720.700 398.300L915 510.700Q922 515 922 524V578.300C922 597 930 612 946.600 620Q1076 696 1194.600 787.700Q1199 793 1198.500 804Q1010 668 900 605.700L748 519.300V478.300L686.700 443.300C666 433 646 404 644.300 373.300z" fill="#6b6f70"/>
        <path d="M922 524l7.700-4v55l-7.700 3.300z" fill="url(#endface)"/>
        <path d="M720.700 398.300l7.600-4.300M915 510.700l6.700-4.700M946.600 620l7.700-3.300M1194.600 787.700l8.400-4.700M685 350l7-4" fill="none"/>
        <path d="M1199 802q9-6 12 2l7 3q-3 9-10 9-9-2-9-8z" fill="#c9cccf"/>
        <path d="M1213 806l3-5 5 2-3 3v12" fill="none"/>

        <!-- holes in the ears -->
        <g fill="#fff">
          <ellipse cx="684.300" cy="396" rx="10.500" ry="16.500" transform="rotate(-24 684.300 396)"/>
          <ellipse cx="803.300" cy="327.300" rx="10.500" ry="16.500" transform="rotate(-24 803.300 327.300)"/>
        </g>
        <path d="M680 381q0 17 14 25M799 312q0 17 14 25" fill="none"/>
        <path d="M674 389q2-6 6-7 0 12 6 19l-1 10q-10-6-11-22zM793 320q2-6 6-7 0 12 6 19l-1 10q-10-6-11-22z" fill="#dfe1e2" stroke="none" opacity=".8"/>

        <ellipse cx="1299.700" cy="769.700" rx="17" ry="10" fill="#96989a"/>
        <path d="M1284 774q15-9 31 0-6 6-16 6-9 0-15-6z" fill="#777" stroke-width=".8"/>
      </g>

      <!-- boss on the tongue -->
      <g transform="translate(1230 700) scale(.33333)" stroke="#111" stroke-width="3.500" stroke-linejoin="round">
        <path d="M133 350Q130 320 160 303L440 142Q468 128 500 142L685 250Q710 262 709 290L707 315 410 485Q370 500 335 485L140 375Q130 362 133 350z" fill="#ececec"/>
        <path d="M133 352L338 474Q370 488 407 474L709 298V318L410 487Q370 502 335 488L140 376Q131 366 133 352z" fill="#454748"/>
        <path d="M165 320L350 434 338 478 136 360Q130 330 165 320z" fill="url(#filletL)"/>
        <path d="M390 432L672 268Q700 285 695 306L407 478z" fill="url(#filletR)"/>
        <path d="M672 268Q685 250 688 252 712 264 709 294L695 306Q694 284 672 268z" fill="#f6f6f6"/>
        <path d="M150 362Q143 328 167 318L165 310Q132 322 133 352z" fill="#f6f6f6"/>
        <path d="M165 315L450 147Q468 138 490 147L680 258 672 270 385 434H350L165 325z" fill="#8b8b8b"/>
        <path d="M339 478Q345 436 373 434 405 436 407 478 370 490 339 478z" fill="#f2f3f3"/>
        <path d="M455 240L527 200 573 230 505 267zM265 352L337 310 383 338 312 376z" fill="url(#pocket)"/>
        <path d="M455 240L527 200Q527 238 505 267zM265 352L337 310Q336 350 312 376z" fill="#555"/>
      </g>

      <!-- triad -->
      <g stroke-width="4">
        <path d="M323 920V899" stroke="#2d8a35"/><path d="M318.500 901l4.500-10 4.500 10z" fill="#0f5c16"/>
        <path d="M323 920l18 10" stroke="#8d1818"/><path d="M338 934l11 0-6-9z" fill="#a80f0f"/>
        <path d="M323 920l-18 10" stroke="#15157d"/><path d="M308 934l-11 0 6-9z" fill="#0b0b9c"/>
      </g>
      <g class="axis">
        <text x="321" y="884" fill="#3f7a45">Y</text>
        <text x="352" y="938" fill="#b04a4a">X</text>
        <text x="289" y="938" fill="#3a3ab0">Z</text>
      </g>
    </svg>
    <p class="view-name">*Isometric</p>

    <nav class="task-pane">
      <button class="active" aria-label="Resources"><svg><use href="#i-home"/></svg></button>
      <button aria-label="Design library"><svg><use href="#i-library"/></svg></button>
      <button aria-label="File explorer"><svg><use href="#i-dir"/></svg></button>
      <button aria-label="View palette"><svg><use href="#i-palette"/></svg></button>
      <button aria-label="Appearances"><svg><use href="#i-ball"/></svg></button>
      <button aria-label="Custom properties"><svg><use href="#i-proplist"/></svg></button>
      <button aria-label="Forum"><svg><use href="#i-forum"/></svg></button>
    </nav>
  </section>
</main>

<footer class="bottom-tabs"><span class="nav"></span><span class="open"></span><span class="rest"></span></footer>

</body>
</html>
```

FILE: styles.css
```css
* {
  box-sizing: border-box;
}
body {
  margin: 0;
  height: 100vh;
  display: flex;
  flex-direction: column;
  overflow: hidden;
  background: #f7f7f7;
  color: #1a1a1a;
  font-family: "Noto Sans", "Open Sans", sans-serif;
  font-size: 13px;
}
button {
  border: none;
  background: none;
  padding: 0;
  margin: 0;
  font: inherit;
  color: inherit;
  display: flex;
  align-items: center;
  justify-content: center;
}
button:disabled {
  color: #b9b9b9;
}
input {
  border: none;
  outline: none;
  background: none;
  font: inherit;
  min-width: 0;
  padding: 0;
}
svg {
  display: block;
  flex: none;
}
.sprite {
  position: absolute;
  width: 0;
  height: 0;
}

/* title bar */
.titlebar {
  display: flex;
  align-items: stretch;
  height: 41px;
  flex: none;
  border-top: 1px solid #bdbdbd;
  border-bottom: 1px solid #bdbdbd;
}
.logo {
  display: flex;
  align-items: center;
  width: 138px;
  padding-left: 5px;
  color: #c22f2c;
  text-decoration: none;
  font-family: "Open Sans", sans-serif;
  font-style: italic;
}
.logo svg {
  margin-right: 3px;
  margin-bottom: 5px;
}
.solid {
  font-size: 14px;
  font-weight: 800;
}
.works {
  font-size: 13px;
}
.menu {
  display: flex;
  width: 284px;
  padding-top: 3px;
}
.menu button {
  padding: 0 8px;
}
.pin {
  width: 28px;
  padding-bottom: 2px;
}
.quick {
  display: flex;
  align-items: center;
  border-left: 1px solid #bdbdbd;
  padding-left: 16px;
  color: #333;
}
.quick button {
  width: 30px;
  height: 32px;
}
.quick button svg {
  width: 18px;
  height: 18px;
}
.quick .drop {
  width: 17px;
}
.quick .drop svg, .quick .select-drop svg {
  width: 8px;
  height: 8px;
}
.quick .off {
  color: #999;
}
.flip {
  transform: scaleX(-1);
}
.quick .select-tool {
  width: 32px;
  background: #b1b1b1;
  border: 1px solid #808080;
}
.quick .select-drop {
  width: 15px;
  background: #fff;
  border: 1px solid #999;
  border-left: none;
}
.quick .roomy {
  width: 33px;
}
.doc-title {
  flex: 1;
  margin: 0;
  padding-top: 2px;
  text-align: center;
  font-size: 13px;
  font-weight: 400;
  line-height: 36px;
}
.search {
  display: flex;
  align-items: center;
  width: 252px;
  margin: 5px 3px 5px 0;
  padding: 0 5px;
  background: #fff;
  border: 1px solid #b0b0b0;
}
.search input {
  flex: 1;
  padding-left: 8px;
}
.search input::placeholder {
  color: #555;
}
.search-caret {
  margin-left: 7px;
  color: #555;
}
.window-buttons {
  display: flex;
  padding-right: 5px;
  color: #333;
}
.window-buttons button {
  width: 41px;
}

/* capture toolbar */
.capture-bar {
  display: flex;
  height: 32px;
  flex: none;
  border-bottom: 1px solid #bdbdbd;
}
.capture-tools {
  display: flex;
  align-items: center;
  margin-left: 4px;
  width: 99px;
  padding-left: 8px;
  border-left: 2px dotted #999;
  border-right: 1px solid #777;
}
.capture-tools button {
  width: 27px;
}

/* ribbon */
.ribbon {
  display: flex;
  height: 81px;
  flex: none;
  border-right: 1px solid #808080;
}
.group {
  display: flex;
  margin: 1px 0 2px;
  border-right: 1px solid #c4c4c4;
}
.first {
  padding-left: 3px;
}
.cmd {
  display: block;
  padding: 5px 5px 15px;
  text-align: center;
  line-height: 19px;
  white-space: nowrap;
}
.cmd svg {
  width: 18px;
  height: 18px;
  margin: 0 auto 1px;
}
.stack {
  display: flex;
  flex-direction: column;
  align-items: flex-start;
}
.stack button {
  height: 26px;
  gap: 7px;
  padding-left: 5px;
}
.stack svg {
  width: 18px;
  height: 18px;
}
.exports .stack:first-child {
  width: 298px;
}
.exports .stack:last-child {
  width: 148px;
}
.last {
  flex: 1;
  border-right: none;
  justify-content: space-between;
}
.collapse {
  align-self: flex-end;
  padding: 0 7px 8px 0;
}

/* command tabs */
.tabs {
  display: flex;
  height: 29px;
  flex: none;
  font-size: 14px;
  color: #333;
}
.tabs > button {
  padding: 0 9px;
  background: #d2d2d2;
  border: 1px solid #808080;
  border-left: none;
}
.tabs > .mbd {
  padding: 0 11px;
}
.tabs > .long {
  padding: 0 18px 0 14px;
}
.tabs > .active {
  padding: 0 16px;
  background: #f7f7f7;
  border-top-color: #f7f7f7;
  font-weight: 700;
}
.doc-buttons {
  flex: 1;
  display: flex;
  justify-content: flex-end;
  padding-right: 7px;
  background: #fff;
  border-top: 1px solid #808080;
  color: #999;
}
.doc-buttons button {
  width: 26px;
}

/* workspace */
.workspace {
  display: flex;
  flex: 1;
  min-height: 0;
}
.panel {
  position: relative;
  display: flex;
  flex-direction: column;
  width: 273px;
  flex: none;
  padding-right: 2px;
  border-left: 1px solid #b5b5b5;
  border-right: 1px solid #808080;
}
.grip {
  display: flex;
  align-items: center;
  justify-content: center;
  height: 21px;
  margin: 4px 0;
  border-top: 1px solid #b9c6cc;
  border-bottom: 1px solid #b9c6cc;
}
.dot {
  width: 6px;
  height: 6px;
  border: 1px solid #888;
  border-radius: 50%;
  background: #ccc;
}
.panel-tabs {
  display: flex;
  height: 26px;
  flex: none;
}
.panel-tabs button {
  width: 40px;
  background: #d4d4d4;
  border: 1px solid #8a8a8a;
  border-left: none;
}
.panel-tabs button svg {
  width: 18px;
  height: 18px;
}
.panel-tabs .active {
  width: 41px;
  background: #f7f7f7;
  border-top-color: #f7f7f7;
  border-bottom-color: #f7f7f7;
}
.panel-tabs .cut {
  width: 24px;
  border-right: none;
  justify-content: flex-end;
}
.panel-tabs .cut svg {
  width: 14px;
}
.panel-tabs .arrow {
  flex: 1;
  margin-top: 2px;
  background: #fafafa;
  border: 1px solid #c4c4c4;
}
.panel-tabs .arrow svg {
  width: 8px;
  height: 8px;
}
.filter {
  display: flex;
  align-items: center;
  height: 32px;
  flex: none;
  margin: 0 3px 0 4px;
  padding-left: 2px;
  border: 1px solid #c2c2c2;
}
.filter input {
  flex: 1;
}
.tree {
  list-style: none;
  margin: 0;
  padding: 0;
  font-size: 14px;
  flex: none;
  border-bottom: 4px solid #3f8ab2;
}
.tree li {
  display: flex;
  align-items: center;
  height: 24px;
  padding-left: 25px;
  white-space: nowrap;
}
.tree li svg {
  width: 18px;
  height: 18px;
  margin-right: 6px;
}
.tree .root {
  padding-left: 4px;
}
.tree .root svg {
  margin-right: 4px;
}
.tree li button {
  width: 8px;
  height: 10px;
  margin-left: -18px;
  margin-right: 10px;
}
.tree li button::before {
  content: "";
  border: 4px solid transparent;
  border-left-color: #555;
  border-right: none;
}
.tree .suppressed {
  color: #999;
}
.scrollbar {
  display: flex;
  height: 19px;
  margin-top: auto;
  margin-bottom: 6px;
  background: #f0f0f0;
}
.scrollbar button {
  width: 20px;
}
.track {
  flex: 1;
}
.thumb {
  width: 84%;
  height: 100%;
  background: #cdcdcd;
}
.splitter {
  position: absolute;
  left: 100%;
  top: 45%;
  z-index: 2;
  width: 11px;
  height: 49px;
  background: #f7f7f7;
  border: 1px solid #808080;
  border-left: none;
}

/* graphics area */
.viewport {
  position: relative;
  flex: 1;
  min-width: 0;
  background: #fff;
}
.model {
  position: absolute;
  left: 0;
  top: 0;
  width: 100%;
  height: 100%;
}
.axis {
  font-family: "Liberation Sans", sans-serif;
  font-size: 10px;
}
.view-tools {
  position: relative;
  z-index: 1;
  display: flex;
  justify-content: center;
  padding: 5px 6px 0 0;
  color: #777;
}
.view-tools button {
  width: 26px;
  height: 20px;
}
.view-tools svg {
  width: 18px;
  height: 18px;
}
.view-tools .vdrop {
  width: 14px;
}
.view-tools .vdrop svg {
  width: 7px;
  height: 7px;
}
.view-name {
  position: absolute;
  left: 11px;
  bottom: 1px;
  margin: 0;
  font-family: Lato, sans-serif;
  font-size: 18px;
  font-weight: 700;
  line-height: 20px;
  color: #111;
}
.task-pane {
  position: absolute;
  right: 0;
  top: 29px;
  width: 33px;
  border: 1px solid #8a8a8a;
  border-right: none;
}
.task-pane button {
  width: 100%;
  height: 30px;
  background: #d4d4d4;
  border-bottom: 1px solid #8a8a8a;
}
.task-pane button:last-child {
  border-bottom: none;
}
.task-pane .active {
  background: #fafafa;
}
.task-pane svg {
  width: 18px;
  height: 18px;
}

.bottom-tabs {
  display: flex;
  height: 3px;
  flex: none;
  border-top: 1px solid #888;
}
.bottom-tabs .nav {
  width: 82px;
  background: #3b3b66;
}
.bottom-tabs .open {
  width: 76px;
  background: #fff;
}
.bottom-tabs .rest {
  width: 233px;
  background: #d4d4d4;
}
```
